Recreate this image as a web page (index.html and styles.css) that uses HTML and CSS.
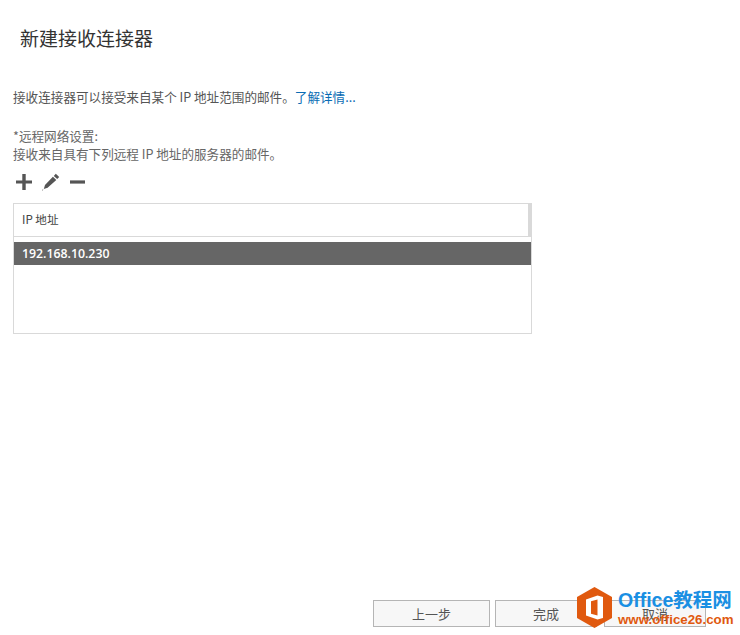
FILE: index.html
```html
<!DOCTYPE html>
<html lang="zh">
<head>
<meta charset="utf-8">
<title>新建接收连接器</title>
<link rel="stylesheet" href="styles.css">
</head>
<body>
<div class="page">
  <h1 class="title">新建接收连接器</h1>
  <p class="intro">接收连接器可以接受来自某个 IP 地址范围的邮件。<a class="link" href="#">了解详情...</a></p>
  <div class="field-label">
    <div>*远程网络设置:</div>
    <div>接收来自具有下列远程 IP 地址的服务器的邮件。</div>
  </div>
  <div class="toolbar">
    <svg class="icon" viewBox="0 0 18 18"><path d="M7.300 1h3.400v6.400H17v3.200h-6.300V17H7.300v-6.400H1V7.400h6.300z"/></svg>
    <svg class="icon" viewBox="0 0 18 18"><path d="M13.800 .8l3.400 3.200-2 2.100-3.400-3.200zM10.900 3.800l3.400 3.200-8.700 7.800-3.800 1.300 1.200-4z"/><path d="M0 18l1.400-1.200-.6-.6z"/></svg>
    <svg class="icon" viewBox="0 0 18 18"><path d="M1 7.400h15v3.200H1z"/></svg>
  </div>
  <div class="table">
    <div class="table-head">IP 地址</div>
    <div class="table-body">
      <div class="row-selected">192.168.10.230</div>
    </div>
  </div>
  <div class="footer">
    <button class="btn btn-back" type="button">上一步</button>
    <button class="btn" type="button">完成</button>
    <button class="btn btn-cancel" type="button">取消</button>
  </div>
  <div class="watermark">
    <svg class="wm-logo" viewBox="0 0 35 41">
      <path class="wm-hex" d="M17.500 0L35 10v21L17.500 41 0 31V10z"/>
      <path class="wm-door" d="M20.500 8.500L9 12.500v16l11.500 4 5.500-1.500V10zM20.500 12.500v16l-6.500-1.800V14.300z"/>
    </svg>
    <div class="wm-text">
      <div class="wm-top">Office教程网</div>
      <div class="wm-bottom">www.office26.com</div>
    </div>
  </div>
</div>
</body>
</html>
```
FILE: styles.css
```css
* { box-sizing: border-box; }
html, body { margin: 0; padding: 0; background: #fff; }
body { font-family: "Noto Sans CJK SC", "Liberation Sans", sans-serif; color: #555; }
.page { position: relative; width: 740px; height: 635px; padding: 0 0 0 13px; overflow: hidden; display: flex; flex-direction: column; }
.title { margin: 24px 0 0 7px; font-size: 19px; line-height: 28px; font-weight: 400; color: #333; }
.intro { margin: 36px 0 0; font-size: 12.600px; line-height: 18px; color: #555; }
.link { color: #0a6cb4; text-decoration: none; }
.field-label { margin-top: 21px; font-size: 12.600px; line-height: 18px; color: #666; }
.toolbar { display: flex; gap: 9px; margin: 10px 0 0 2px; height: 18px; align-items: center; }
.icon { width: 18px; height: 18px; fill: #555; }
.table { margin-top: 12px; width: 519px; height: 131px; border: 1px solid #d9d9d9; display: flex; flex-direction: column; }
.table-head { height: 33px; padding-left: 8px; font-size: 11.600px; line-height: 31px; color: #444; border-right: 3px solid #d9d9d9; border-bottom: 1px solid #d9d9d9; }
.table-body { padding-top: 5px; }
.row-selected { height: 23px; padding-left: 8px; background: #666; color: #fff; font-family: "Open Sans", "Liberation Sans", sans-serif; font-size: 12.300px; font-weight: 600; line-height: 23px; }
.footer { position: absolute; left: 373px; top: 600px; display: flex; gap: 5px; }
.btn { width: 102px; height: 27px; padding: 0; background: #f7f7f7; border: 1px solid #b5b5b5; font-family: inherit; font-size: 13px; color: #555; }
.btn-back { width: 117px; }
.btn-cancel { margin-left: 2px; }
.watermark { position: absolute; left: 577px; top: 587px; display: flex; gap: 6px; align-items: center; }
.wm-logo { width: 35px; height: 41px; }
.wm-hex { fill: #e0590f; }
.wm-door { fill: #fff; fill-rule: evenodd; }
.wm-text { display: flex; flex-direction: column; font-family: "Liberation Sans", "Noto Sans CJK SC", sans-serif; font-weight: 700; }
.wm-top { font-size: 19.500px; line-height: 24px; color: #1a8fe3; white-space: nowrap; }
.wm-bottom { font-size: 13.300px; line-height: 15px; color: #e0590f; white-space: nowrap; }
```
